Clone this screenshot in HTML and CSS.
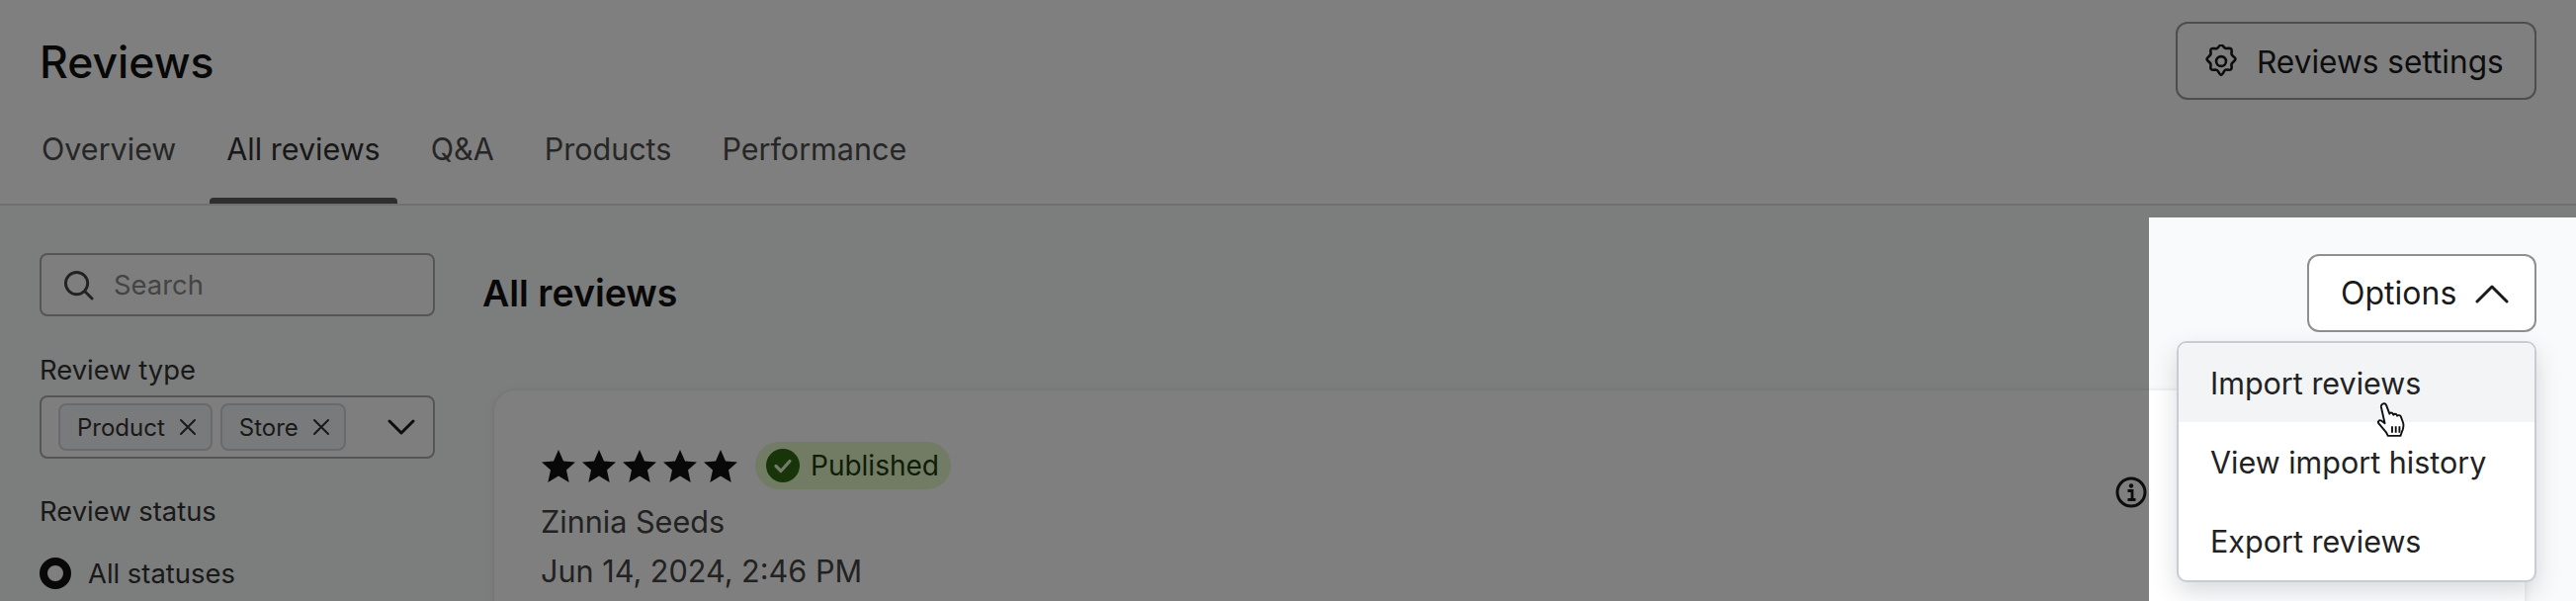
FILE: index.html
```html
<!DOCTYPE html>
<html lang="en">
<head>
  <meta charset="UTF-8" />
  <title>Reviews</title>
  <link rel="stylesheet" href="styles.css">
</head>
<body>

  <header class="page-head">
    <div class="title-row">
      <h1>Reviews</h1>
      <button class="btn settings-btn">
        <svg class="gear" viewBox="1.500 1.500 31 31" fill="none" stroke="currentColor" stroke-width="2.400" stroke-linejoin="round"><path d="M17 1.800c1.600 0 2.400 2.600 4 3.200s4-.7 5.200.5 0 3.600.5 5.200 3.500 2.700 3.500 4.300-2.900 2.800-3.500 4.300.7 3.900-.5 5.100-3.600 0-5.200.5-2.400 4.800-4 4.800-2.400-3.900-4-4.600-4 .5-5.200-.7.100-3.500-.5-5.100-3.500-2.700-3.500-4.300 2.900-2.800 3.500-4.300-.7-3.800.5-5 3.600.1 5.200-.5 2.400-3.200 4-3.200z"/><circle cx="17" cy="17" r="4.500"/></svg>
        Reviews settings
      </button>
    </div>
    <nav class="tabs">
      <a class="tab">Overview</a>
      <a class="tab active">All reviews</a>
      <a class="tab">Q&amp;A</a>
      <a class="tab">Products</a>
      <a class="tab">Performance</a>
    </nav>
  </header>

  <main class="layout">
    <aside class="sidebar">
      <div class="search">
        <svg class="search-icon" viewBox="0 0 32 32" fill="none" stroke="currentColor" stroke-width="3" stroke-linecap="round"><circle cx="14" cy="14" r="11.500"/><path d="M22.500 22.500 30 30"/></svg>
        <span>Search</span>
      </div>

      <div class="field-label type-label">Review type</div>
      <div class="multi-select">
        <span class="chip">Product
          <svg viewBox="0 0 18 18" stroke="currentColor" stroke-width="2" stroke-linecap="round"><path d="M2 2l14 14M16 2 2 16"/></svg>
        </span>
        <span class="chip">Store
          <svg viewBox="0 0 18 18" stroke="currentColor" stroke-width="2" stroke-linecap="round"><path d="M2 2l14 14M16 2 2 16"/></svg>
        </span>
        <svg class="select-chevron" viewBox="0 0 28 16" fill="none" stroke="currentColor" stroke-width="3" stroke-linecap="round" stroke-linejoin="round"><path d="M2 2l12 12L26 2"/></svg>
      </div>

      <div class="field-label status-label">Review status</div>
      <label class="radio-row"><span class="radio"></span>All statuses</label>
    </aside>

    <section class="content">
      <div class="content-head">
        <h2>All reviews</h2>
        <div class="options">
          <button class="btn options-btn">Options
            <svg viewBox="0 0 34 20" fill="none" stroke="currentColor" stroke-width="3" stroke-linecap="round" stroke-linejoin="round"><path d="M2 18 17 3l15 15"/></svg>
          </button>
          <div class="menu">
            <a class="menu-item hover">Import reviews</a>
            <a class="menu-item">View import history</a>
            <a class="menu-item">Export reviews</a>
            <svg class="hand" viewBox="0 0 30 34" stroke="#111" stroke-width="1.800" stroke-linejoin="round" fill="#fff"><path d="M6 1.500c1.500-.8 3 0 3.500 1.500l3 8c.6-1.400 2.600-1.300 3.200 0l.6 1c.6-1.200 2.600-1.200 3.200.2l.4.8c.8-1 2.800-.8 3.400.6l2.200 6c.8 3 .2 6-1.500 9.400l-1 3H11l-1.500-3L2 20c-1-1.500.6-3.500 2.500-2.500l3.500 2.500L4.500 4.500C4.300 3.200 5 2 6 1.500z"/><path d="M15 23v6M18.500 23v6M22 23v6" fill="none"/></svg>
          </div>
        </div>
      </div>

      <article class="review-card">
        <div class="rating-row">
          <svg class="stars" viewBox="0 0 198 33" fill="currentColor">
            <path id="s1" d="M17 0l5 11.500 12 1.100-9 8 2.700 12.400L17 26.500 6.300 33 9 20.600l-9-8 12-1.100z"/>
            <use href="#s1" x="41"/><use href="#s1" x="82"/><use href="#s1" x="123"/><use href="#s1" x="164"/>
          </svg>
          <span class="badge">
            <svg viewBox="0 0 34 34"><circle cx="17" cy="17" r="17" fill="#2f6a12"/><path d="M10 17.500l5 5 9-10" fill="none" stroke="#e8f5d8" stroke-width="3.200" stroke-linecap="round" stroke-linejoin="round"/></svg>
            Published
          </span>
        </div>
        <svg class="info" viewBox="0 0 32 32" fill="none" stroke="currentColor" stroke-width="3"><circle cx="16" cy="16" r="14"/><circle cx="16" cy="9.500" r="2.200" fill="currentColor" stroke="none"/><path d="M12.500 14.500H17V23M12.500 23.500h8" stroke-width="2.800"/></svg>
        <div class="meta">Zinnia Seeds</div>
        <div class="meta">Jun 14, 2024, 2:46 PM</div>
      </article>
    </section>
  </main>

  <!-- dims everything outside the highlighted box -->
  <div class="spotlight"></div>

</body>
</html>
```

FILE: styles.css
```css
* { box-sizing: border-box; }
html, body { height: 100%; }
body {
  margin: 0;
  height: 608px;
  overflow: hidden;
  position: relative;
  background: #f9fafb;
  color: #1a1a1a;
  font-family: Inter, 'Liberation Sans', sans-serif;
  font-size: 30.500px;
}

.page-head {
  height: 208px;
  background: #fff;
  border-bottom: 2px solid #dfe0e0;
}
.title-row {
  display: flex;
  justify-content: space-between;
  align-items: flex-start;
  padding: 22px 40px 0;
  height: 118px;
}
h1 {
  margin: 17px 0 0;
  font-size: 44.500px;
  line-height: 48px;
  font-weight: 500;
  color: #111;
}
.btn {
  display: flex;
  align-items: center;
  background: #fff;
  border: 2px solid #9a9a9a;
  border-radius: 12px;
  font: inherit;
  font-size: 32px;
  color: #1a1a1a;
  cursor: pointer;
}
.settings-btn {
  width: 365px;
  height: 79px;
  padding: 2px 0 0 27px;
  gap: 19px;
  font-size: 31.600px;
}
.gear { width: 34px; height: 34px; margin-top: -2px; }

.tabs {
  display: flex;
  margin-left: 25px;
}
.tab {
  position: relative;
  padding: 0 17px;
  height: 88px;
  line-height: 40px;
  padding-top: 13px;
  margin-right: 17px;
  color: #4d4d4d;
  white-space: nowrap;
}
.tab.active { color: #303030; }
.tab.active::after {
  content: "";
  position: absolute;
  left: 0;
  right: 0;
  bottom: 0;
  height: 6px;
  background: #5c5c5c;
  border-radius: 4px 4px 0 0;
}

.layout {
  display: flex;
  padding: 48px 40px 0;
}
.sidebar {
  width: 400px;
  flex: none;
}
.search {
  display: flex;
  align-items: center;
  height: 64px;
  padding-left: 22px;
  gap: 20px;
  background: #fdfdfd;
  border: 2px solid #aaa;
  border-radius: 8px;
  color: #888;
  font-size: 27.400px;
}
.search-icon { width: 31px; height: 31px; color: #444; }

.field-label {
  font-size: 27.400px;
  line-height: 34px;
  color: #333;
}
.type-label { margin-top: 37px; }
.status-label { margin-top: 36px; }

.multi-select {
  display: flex;
  align-items: center;
  gap: 8px;
  height: 64px;
  margin-top: 9px;
  padding-left: 17px;
  background: #fdfdfd;
  border: 2px solid #aaa;
  border-radius: 8px;
  position: relative;
}
.chip {
  display: flex;
  align-items: center;
  gap: 14px;
  height: 48px;
  padding: 0 14px 0 17px;
  background: #f3f4f6;
  border: 2px solid #d0d4d9;
  border-radius: 8px;
  font-size: 24px;
  color: #333;
}
.chip svg { width: 18px; height: 18px; }
.select-chevron {
  width: 28px;
  height: 16px;
  margin-left: auto;
  margin-right: 18px;
}

.radio-row {
  display: flex;
  align-items: center;
  gap: 17px;
  margin-top: 26px;
  font-size: 27.400px;
  line-height: 40px;
  color: #333;
}
.radio {
  width: 32px;
  height: 32px;
  border-radius: 50%;
  border: 8px solid #111;
  background: #fff;
}

.content {
  flex: 1;
  margin-left: 49px;
  min-width: 0;
}
.content-head {
  display: flex;
  justify-content: space-between;
  align-items: center;
  height: 79px;
  margin-top: 1px;
}
h2 {
  margin: 0 0 0 -1px;
  font-size: 37.500px;
  font-weight: 600;
  color: #111;
}
.options {
  position: relative;
  z-index: 5;
}
.options-btn {
  width: 232px;
  height: 79px;
  padding-left: 32px;
  gap: 19px;
  border-color: #8f8f8f;
}
.options-btn svg { width: 34px; height: 20px; }

.menu {
  position: absolute;
  top: calc(100% + 9px);
  right: 0;
  width: 364px;
  background: #fff;
  border: 2px solid #c6ccd4;
  border-radius: 10px;
  overflow: hidden;
  box-shadow: 0 10px 24px rgba(60, 70, 85, .2);
}
.menu-item {
  display: flex;
  align-items: center;
  height: 80px;
  padding-left: 32px;
  color: #222;
  white-space: nowrap;
}
.menu-item.hover { background: #f3f4f6; }
.hand {
  position: absolute;
  left: 200px;
  top: 60px;
  width: 32px;
  height: 36px;
}

.review-card {
  position: relative;
  margin: 57px 10px 0 9px;
  height: 400px;
  padding: 52px 48px;
  background: #fff;
  border: 2px solid #f0f0f1;
  border-radius: 24px;
  box-shadow: 0 2px 8px rgba(0, 0, 0, .05);
}
.rating-row {
  display: flex;
  align-items: center;
  gap: 18px;
  height: 48px;
}
.stars { width: 198px; height: 33px; color: #111; }
.badge {
  display: flex;
  align-items: center;
  gap: 11px;
  width: 198px;
  height: 48px;
  padding-left: 11px;
  background: #e4f8c8;
  border-radius: 24px;
  font-size: 28px;
  color: #1c3a0c;
}
.badge svg { width: 34px; height: 34px; }
.meta {
  font-size: 30.600px;
  line-height: 50px;
  margin-left: -1px;
  color: #444;
}
.rating-row + .info + .meta { margin-top: 8px; }
.info {
  position: absolute;
  top: 87px;
  right: 382px;
  width: 32px;
  height: 32px;
}

.spotlight {
  position: absolute;
  left: 2174px;
  top: 220px;
  right: 0;
  bottom: 0;
  box-shadow: 0 0 0 3000px rgba(0, 0, 0, .5);
  pointer-events: none;
}
```
